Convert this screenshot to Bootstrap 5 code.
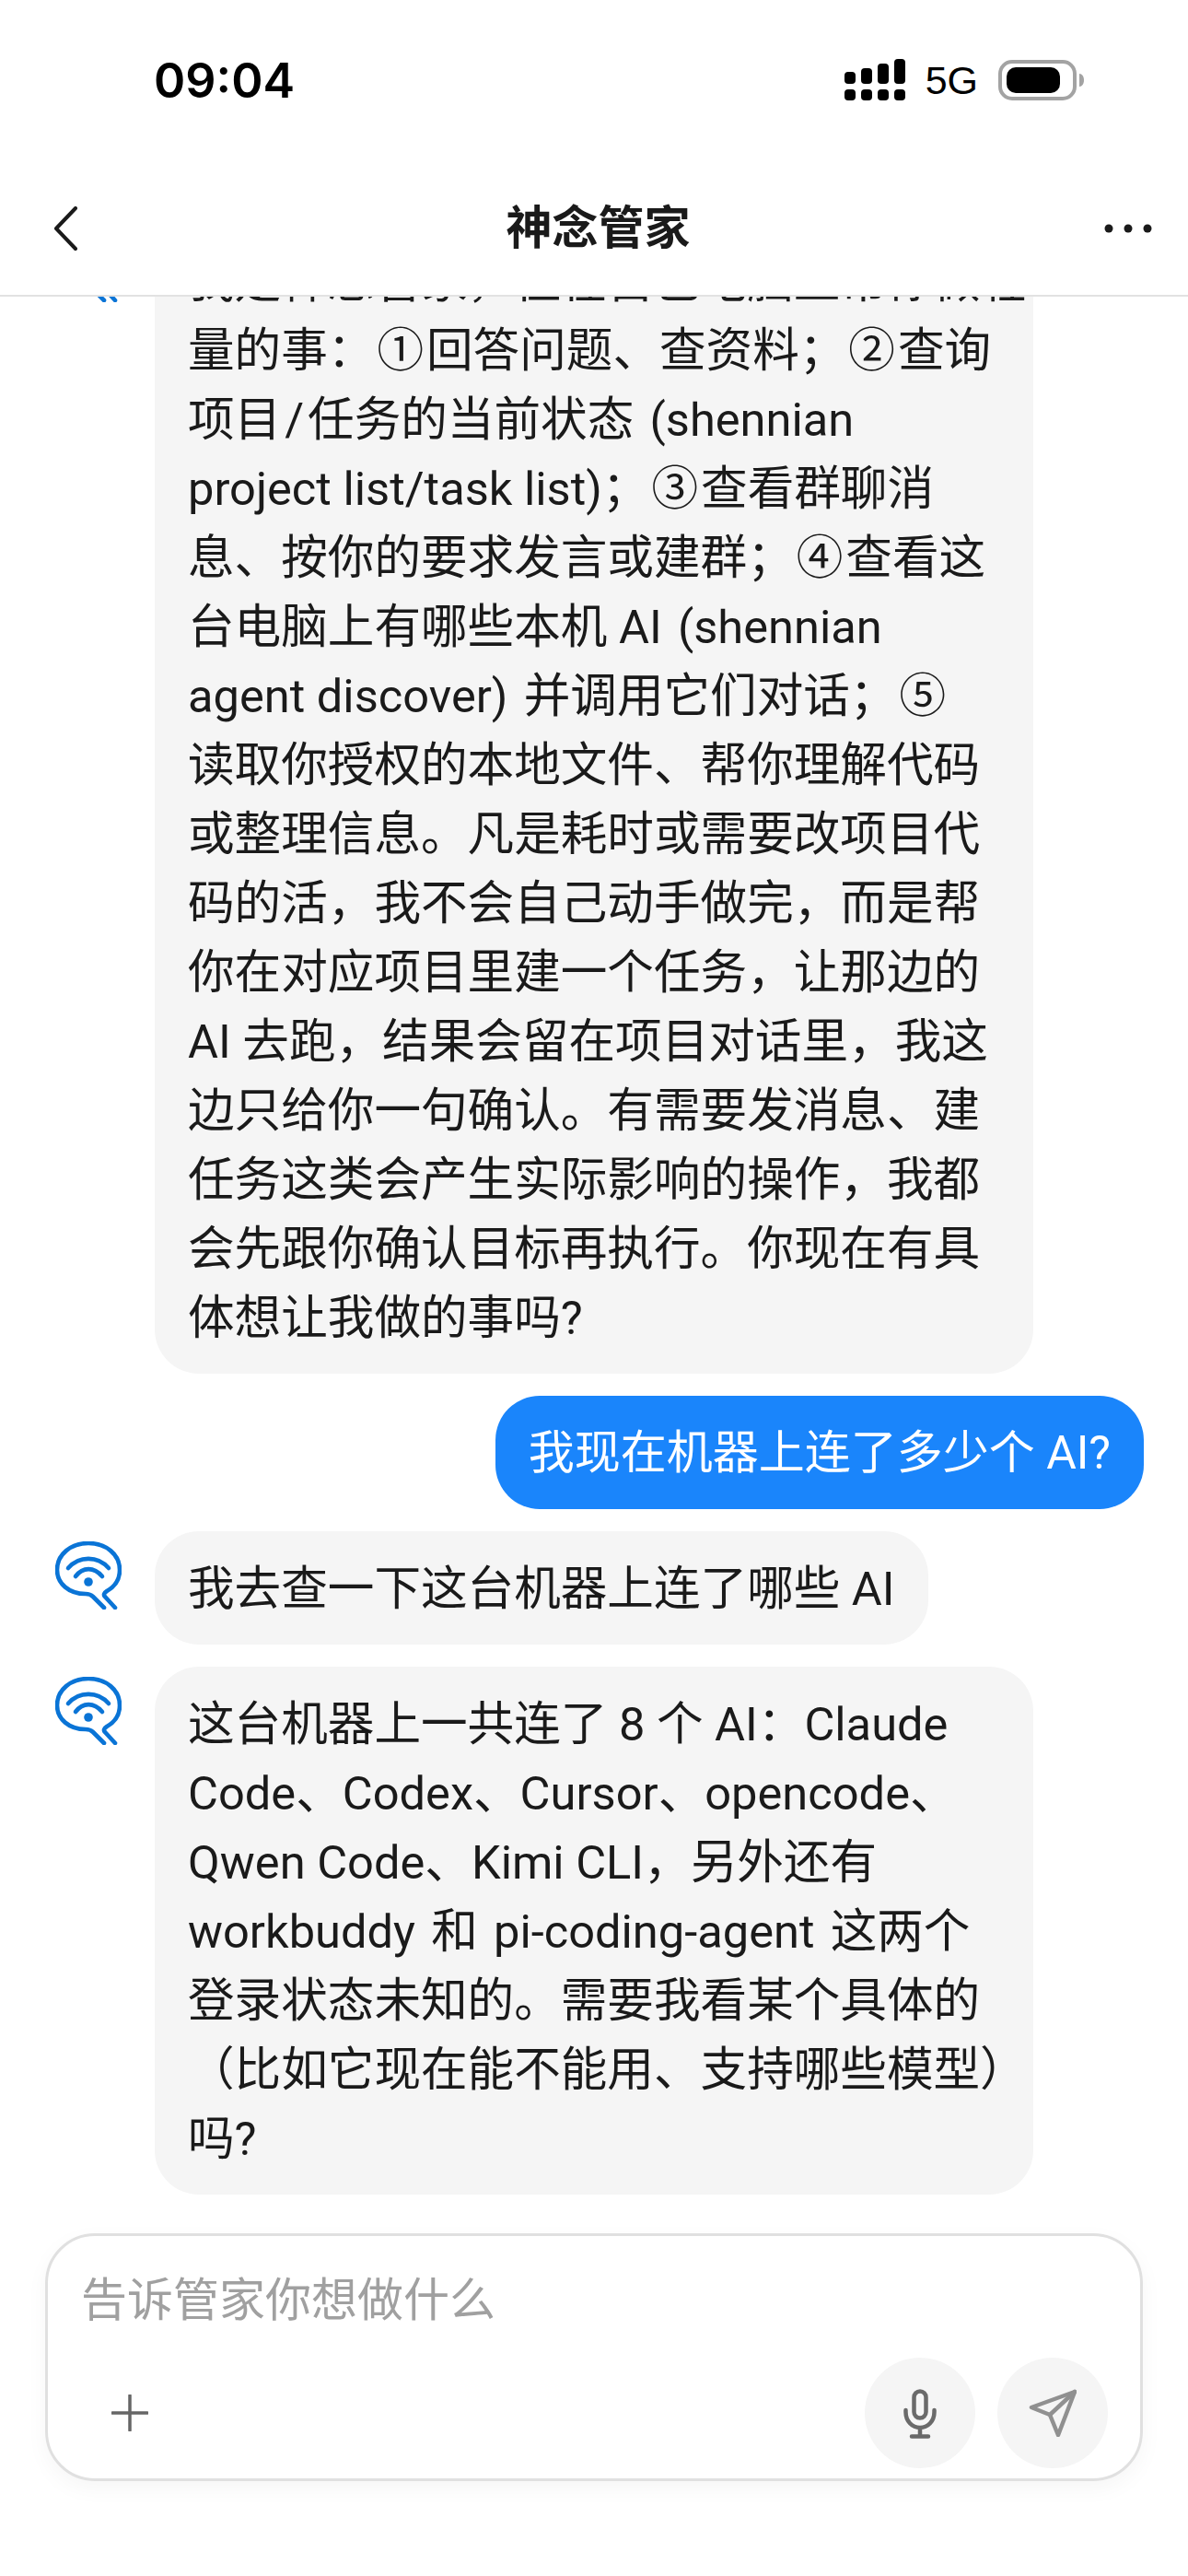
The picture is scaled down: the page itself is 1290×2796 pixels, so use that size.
<!DOCTYPE html>
<html lang="zh-CN">
<head>
  <meta charset="UTF-8" />
  <meta name="viewport" content="width=device-width, initial-scale=1.0"/>
  <title>神念管家</title>
  <link href="https://cdn.jsdelivr.net/npm/bootstrap@5.3.2/dist/css/bootstrap.min.css" rel="stylesheet" />
  <style>
    html, body {
      height: 2796px;
      overflow: hidden;
    }
    body {
      background: #fff;
      color: #1a1a1a;
      font-family: Roboto, "Noto Sans CJK SC", sans-serif;
    }
    .phone-page {
      height: 2796px;
    }
    .status-row {
      height: 176px;
      padding: 58px 112px 0 167px;
    }
    .status-time {
      font-family: Inter, sans-serif;
      font-size: 52px;
      font-weight: 600;
      line-height: 60px;
      color: #000;
    }
    .status-icons {
      gap: 22px;
      padding-top: 6px;
    }
    .status-net {
      font-family: "Liberation Sans", sans-serif;
      font-size: 43px;
      line-height: 1;
      color: #000;
    }
    .top-bar {
      height: 146px;
      padding: 0 39px 0 58px;
      border-bottom: 2px solid #e2e2e2;
    }
    .top-title {
      font-size: 50px;
      font-weight: 600;
      line-height: 1;
      margin-left: 16px;
    }
    .chat-list {
      min-height: 0;
      padding: 0 48px 0 60px;
      gap: 24px;
    }
    .msg-avatar {
      width: 72px;
      height: 74px;
      margin-top: 11px;
      margin-right: 36px;
      flex-shrink: 0;
    }
    .msg-bubble {
      font-size: 50.6px;
      line-height: 75px;
      padding: 25px 36px 23px;
      border-radius: 48px;
      white-space: nowrap;
    }
    .bubble-in {
      background: #f5f5f5;
    }
    .bubble-wide {
      width: 954px;
    }
    .bubble-out {
      background: #1a85fb;
      color: #fff;
      font-size: 50px;
    }
    .circled-num {
      padding: 0 3px;
    }
    .slash-gap {
      padding: 0 4px;
    }
    .composer-wrap {
      padding: 42px 49px 103px;
    }
    .composer-box {
      height: 269px;
      border: 3px solid #e0e0e0;
      border-radius: 54px;
      box-shadow: 0 8px 24px rgba(0, 0, 0, .04);
      padding: 33px 35px 11px 36px;
    }
    .composer-hint {
      font-size: 50px;
      line-height: 75px;
      color: #a0a0a0;
    }
    .round-btn {
      width: 120px;
      height: 120px;
      border: 0;
      border-radius: 50%;
      background: #f5f5f5;
      padding: 0;
    }
    .add-btn {
      width: 106px;
      height: 120px;
      background: none;
      border: 0;
      padding: 0;
    }
  </style>
</head>
<body>

<svg width="0" height="0" class="position-absolute">
  <symbol id="butlerMark" viewBox="0 0 72 74">
    <g fill="none" stroke="#0a74d6" stroke-width="4.6" stroke-linecap="round" stroke-linejoin="round">
      <path d="M53 72 41 60c-2-2-5-3-8-3C15 57 2 46 2 31 2 14 17 2 36 2s34 12 34 29c0 10-5 18-14 23-3 2-4 4-2 6l11 12"/>
      <path d="M14 29C26 15.500 46 15.500 58 29"/>
      <path d="M22 38C30 27.500 42 27.500 51 38"/>
    </g>
    <circle cx="36" cy="44" r="4.800" fill="#0a74d6"/>
  </symbol>
</svg>

<div class="phone-page d-flex flex-column">

  <!-- status bar -->
  <div class="status-row d-flex justify-content-between align-items-start flex-shrink-0">
    <span class="status-time">09:04</span>
    <div class="status-icons d-flex align-items-center">
      <svg width="66" height="46" viewBox="0 0 66 46" fill="#000">
        <rect x="0" y="33" width="12" height="12" rx="4"/>
        <rect x="18" y="33" width="12" height="12" rx="4"/>
        <rect x="36" y="33" width="12" height="12" rx="4"/>
        <rect x="54" y="33" width="12" height="12" rx="4"/>
        <rect x="0" y="14" width="12" height="13" rx="4"/>
        <rect x="18" y="10" width="12" height="17" rx="4"/>
        <rect x="36" y="5" width="12" height="22" rx="4"/>
        <rect x="54" y="0" width="12" height="27" rx="4"/>
      </svg>
      <span class="status-net">5G</span>
      <svg width="94" height="44" viewBox="0 0 94 44">
        <rect x="2" y="2" width="81" height="40" rx="13" fill="none" stroke="#a3a3a3" stroke-width="4"/>
        <rect x="9" y="8" width="58" height="28" rx="10" fill="#000"/>
        <path d="M88 15c3 0 5 3 5 7s-2 7-5 7z" fill="#a3a3a3"/>
      </svg>
    </div>
  </div>

  <!-- nav -->
  <div class="top-bar d-flex justify-content-between align-items-center flex-shrink-0">
    <svg width="26" height="48" viewBox="0 0 26 48" fill="none" stroke="#1a1a1a" stroke-width="4" stroke-linecap="round" stroke-linejoin="round">
      <path d="M24 2 3 24l21 22"/>
    </svg>
    <span class="top-title">神念管家</span>
    <svg width="52" height="10" viewBox="0 0 52 10" fill="#1a1a1a">
      <circle cx="5" cy="5" r="4.5"/>
      <circle cx="26" cy="5" r="4.5"/>
      <circle cx="47" cy="5" r="4.5"/>
    </svg>
  </div>

  <!-- messages, pinned to bottom so the oldest one clips under the nav -->
  <div class="chat-list flex-grow-1 overflow-hidden d-flex flex-column justify-content-end">
    <div class="d-flex flex-shrink-0">
      <svg class="msg-avatar"><use href="#butlerMark"/></svg>
      <div class="msg-bubble bubble-in bubble-wide">我是神念管家，住在自己电脑上帮你做轻<br>量的事：<span class="circled-num">①</span>回答问题、查资料；<span class="circled-num">②</span>查询<br>项目<span class="slash-gap">/</span>任务的当前状态&#8196;(shennian<br>project list/task list)；<span class="circled-num">③</span>查看群聊消<br>息、按你的要求发言或建群；<span class="circled-num">④</span>查看这<br>台电脑上有哪些本机 AI&#8196;(shennian<br>agent discover)&#8196;并调用它们对话；<span class="circled-num">⑤</span><br>读取你授权的本地文件、帮你理解代码<br>或整理信息。凡是耗时或需要改项目代<br>码的活，我不会自己动手做完，而是帮<br>你在对应项目里建一个任务，让那边的<br>AI 去跑，结果会留在项目对话里，我这<br>边只给你一句确认。有需要发消息、建<br>任务这类会产生实际影响的操作，我都<br>会先跟你确认目标再执行。你现在有具<br>体想让我做的事吗?</div>
    </div>
    <div class="d-flex justify-content-end flex-shrink-0">
      <div class="msg-bubble bubble-out">我现在机器上连了多少个 AI?</div>
    </div>
    <div class="d-flex flex-shrink-0">
      <svg class="msg-avatar"><use href="#butlerMark"/></svg>
      <div class="msg-bubble bubble-in">我去查一下这台机器上连了哪些 AI</div>
    </div>
    <div class="d-flex flex-shrink-0">
      <svg class="msg-avatar"><use href="#butlerMark"/></svg>
      <div class="msg-bubble bubble-in bubble-wide">这台机器上一共连了 8 个 AI：Claude<br>Code、Codex、Cursor、opencode、<br>Qwen Code、Kimi CLI，另外还有<br>workbuddy&#8196;和&#8196;pi-coding-agent&#8196;这两个<br>登录状态未知的。需要我看某个具体的<br>（比如它现在能不能用、支持哪些模型）<br>吗?</div>
    </div>
  </div>

  <!-- composer -->
  <div class="composer-wrap flex-shrink-0">
    <div class="composer-box d-flex flex-column justify-content-between">
      <div class="composer-hint">告诉管家你想做什么</div>
      <div class="d-flex align-items-center gap-4">
        <button class="add-btn me-auto" type="button">
          <svg width="40" height="40" viewBox="0 0 40 40" stroke="#666" stroke-width="3.5" stroke-linecap="round">
            <path d="M20 1v38M1 20h38"/>
          </svg>
        </button>
        <button class="round-btn" type="button">
          <svg width="40" height="56" viewBox="0 0 40 56" fill="none" stroke="#6a6a6a" stroke-width="4.5" stroke-linecap="round">
            <rect x="13.500" y="4.500" width="13" height="29" rx="6.500"/>
            <path d="M4.500 25v2c0 10 7 17 15.500 17s15.500-7 15.500-17v-2M20 44v9.500M11 53.500h18"/>
          </svg>
        </button>
        <button class="round-btn" type="button">
          <svg width="52" height="52" viewBox="0 0 52 52" fill="none" stroke="#909090" stroke-width="4.5" stroke-linejoin="round" stroke-linecap="round">
            <path d="M50 3 3 20l20 8 9 22z"/><path d="M50 3 23 28"/>
          </svg>
        </button>
      </div>
    </div>
  </div>

</div>

<script src="https://cdn.jsdelivr.net/npm/bootstrap@5.3.2/dist/js/bootstrap.bundle.min.js"></script>
</body>
</html>
